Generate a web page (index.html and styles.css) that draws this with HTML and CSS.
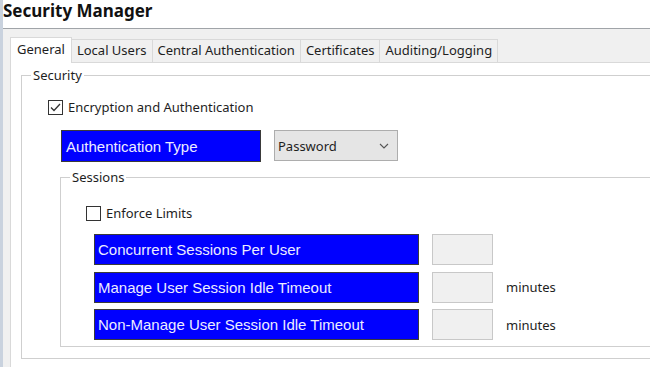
FILE: index.html
```html
<!DOCTYPE html>
<html>
<head>
<meta charset="utf-8">
<link rel="stylesheet" href="styles.css">
</head>
<body>
<div class="window">
  <div class="title">Security Manager</div>
  <div class="frame">
    <div class="tabs">
      <div class="tab active">General</div>
      <div class="tab">Local Users</div>
      <div class="tab">Central Authentication</div>
      <div class="tab">Certificates</div>
      <div class="tab">Auditing/Logging</div>
    </div>
    <div class="panel">
      <fieldset class="group security">
        <legend>Security</legend>
        <div class="check-row enc">
          <span class="box"><svg width="13" height="13" viewBox="0 0 13 13"><path d="M2 6.5 L5 9.5 L11 3" fill="none" stroke="#333" stroke-width="1.3"/></svg></span>
          <span class="check-label">Encryption and Authentication</span>
        </div>
        <div class="auth-row">
          <div class="blue-label auth">Authentication Type</div>
          <div class="select">
            <span>Password</span>
            <svg width="10" height="6" viewBox="0 0 10 6"><path d="M1 1 L5 5 L9 1" fill="none" stroke="#555" stroke-width="1.1"/></svg>
          </div>
        </div>
        <fieldset class="group sessions">
          <legend>Sessions</legend>
          <div class="check-row enforce">
            <span class="box"></span>
            <span class="check-label">Enforce Limits</span>
          </div>
          <div class="rows">
            <div class="field-row">
              <div class="blue-label wide">Concurrent Sessions Per User</div>
              <div class="input"></div>
            </div>
            <div class="field-row">
              <div class="blue-label wide">Manage User Session Idle Timeout</div>
              <div class="input"></div>
              <span class="unit">minutes</span>
            </div>
            <div class="field-row">
              <div class="blue-label wide">Non-Manage User Session Idle Timeout</div>
              <div class="input"></div>
              <span class="unit">minutes</span>
            </div>
          </div>
        </fieldset>
      </fieldset>
    </div>
  </div>
</div>
</body>
</html>
```
FILE: styles.css
```css
html, body {
  margin: 0;
  padding: 0;
  background: #ffffff;
  overflow: hidden;
}
body {
  width: 650px;
  height: 367px;
  font-family: "Noto Sans", "Open Sans", sans-serif;
  font-size: 13px;
  color: #1e1e1e;
}
.window {
  border-left: 3px solid #c9d2de;
  height: 367px;
  width: 647px;
  overflow: hidden;
}
.title {
  height: 28px;
  box-sizing: border-box;
  padding-left: 0;
  font-size: 17px;
  font-weight: bold;
  line-height: 22px;
  color: #111;
}
.frame {
  border-top: 1px solid #a0a4a8;
  background: #f0f0f0;
  padding-left: 7px;
  width: 720px;
  height: 338px;
}
.tabs {
  display: flex;
  align-items: flex-end;
  height: 33px;
  position: relative;
  z-index: 1;
}
.tab {
  height: 22px;
  line-height: 21px;
  padding: 0 5px;
  border: 1px solid #d9d9d9;
  border-bottom: none;
  margin-left: -1px;
  background: #f0f0f0;
  white-space: nowrap;
}
.tab:first-child { margin-left: 0; }
.tab.active {
  line-height: 23px;
  background: #ffffff;
  padding: 0 6px;
  margin-bottom: -1px;
  height: 25px;
}
.panel {
  background: #ffffff;
  border: 1px solid #d9d9d9;
  padding: 4px 0 0 10px;
  height: 320px;
}
.group {
  margin: 0;
  border: 1px solid #cfcfcf;
  padding: 0 0 0 9px;
  min-width: 0;
}
.group legend {
  padding: 0 2px;
  line-height: 16px;
  height: 16px;
}
.security {
  padding-bottom: 11px;
}
.check-row {
  display: flex;
  align-items: center;
  height: 16px;
}
.box {
  width: 13px;
  height: 13px;
  border: 1px solid #333;
  background: #fff;
  display: inline-flex;
  align-items: center;
  justify-content: center;
  margin-right: 5px;
}
.enc {
  margin: 16px 0 0 17px;
}
.auth-row {
  display: flex;
  margin: 15px 0 0 30px;
  gap: 13px;
}
.blue-label {
  background: #0000ff;
  border: 1px solid #3a3a3a;
  box-sizing: border-box;
  color: #ececff;
  font-family: "Liberation Sans", Arial, sans-serif;
  font-size: 15px;
  display: flex;
  align-items: center;
  white-space: nowrap;
}
.auth {
  width: 200px;
  height: 32px;
  padding-left: 4px;
}
.select {
  width: 124px;
  height: 31px;
  box-sizing: border-box;
  background: #e5e5e5;
  border: 1px solid #adadad;
  display: flex;
  align-items: center;
  justify-content: space-between;
  padding: 0 8px 0 3px;
}
.sessions {
  margin: 7px 0 0 29px;
  padding-bottom: 6px;
}
.enforce {
  margin: 20px 0 0 16px;
}
.rows {
  display: flex;
  flex-direction: column;
  gap: 6.5px;
  margin: 13px 0 0 24px;
}
.field-row {
  display: flex;
  align-items: center;
  gap: 13px;
}
.wide {
  width: 325px;
  height: 31px;
  padding-left: 3px;
}
.input {
  width: 61px;
  height: 31px;
  box-sizing: border-box;
  background: #f0f0f0;
  border: 1px solid #c8c8c8;
}
.unit {
  font-size: 13px;
}
```
